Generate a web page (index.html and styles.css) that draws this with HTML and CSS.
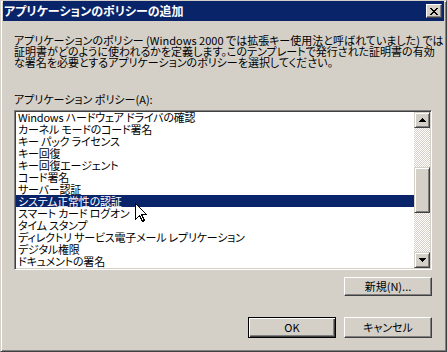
FILE: index.html
```html
<!DOCTYPE html>
<html lang="ja">
<head>
<meta charset="utf-8">
<title>アプリケーションのポリシーの追加</title>
<link rel="stylesheet" href="styles.css">
</head>
<body>
<div class="window">
  <div class="titlebar">
    <span class="title">アプリケーションのポリシーの追加</span>
    <button class="close" aria-label="閉じる">
      <svg width="8" height="7" viewBox="0 0 8 7" shape-rendering="crispEdges">
        <g fill="#000">
          <rect x="0" y="0" width="2" height="1"/><rect x="6" y="0" width="2" height="1"/>
          <rect x="1" y="1" width="2" height="1"/><rect x="5" y="1" width="2" height="1"/>
          <rect x="2" y="2" width="4" height="1"/>
          <rect x="3" y="3" width="2" height="1"/>
          <rect x="2" y="4" width="4" height="1"/>
          <rect x="1" y="5" width="2" height="1"/><rect x="5" y="5" width="2" height="1"/>
          <rect x="0" y="6" width="2" height="1"/><rect x="6" y="6" width="2" height="1"/>
        </g>
      </svg>
    </button>
  </div>
  <div class="content">
    <p class="desc">
      <span class="line">アプリケーションのポリシー (Windows 2000 では拡張キー使用法と呼ばれていました) では</span>
      <span class="line">証明書がどのように使われるかを定義します。このテンプレートで発行された証明書の有効</span>
      <span class="line">な署名を必要とするアプリケーションのポリシーを選択してください。</span>
    </p>
    <div class="label">アプリケーション ポリシー(A):</div>
    <div class="listbox">
      <div class="listview">
        <ul class="items">
          <li>Windows ハードウェア ドライバの確認</li>
          <li>カーネル モードのコード署名</li>
          <li>キー パック ライセンス</li>
          <li>キー回復</li>
          <li>キー回復エージェント</li>
          <li>コード署名</li>
          <li>サーバー認証</li>
          <li class="selected">システム正常性の認証</li>
          <li>スマート カード ログオン</li>
          <li>タイム スタンプ</li>
          <li>ディレクトリ サービス電子メール レプリケーション</li>
          <li>デジタル権限</li>
          <li>ドキュメントの署名</li>
          <li>ファイル回復</li>
        </ul>
      </div>
      <div class="scrollbar">
        <div class="sb-btn">
          <svg width="7" height="4" viewBox="0 0 7 4" shape-rendering="crispEdges"><g fill="#000"><rect x="3" y="0" width="1" height="1"/><rect x="2" y="1" width="3" height="1"/><rect x="1" y="2" width="5" height="1"/><rect x="0" y="3" width="7" height="1"/></g></svg>
        </div>
        <div class="thumb"></div>
        <div class="sb-space"></div>
        <div class="sb-btn">
          <svg width="7" height="4" viewBox="0 0 7 4" shape-rendering="crispEdges"><g fill="#000"><rect x="0" y="0" width="7" height="1"/><rect x="1" y="1" width="5" height="1"/><rect x="2" y="2" width="3" height="1"/><rect x="3" y="3" width="1" height="1"/></g></svg>
        </div>
      </div>
    </div>
    <div class="row-new">
      <button class="btn btn-new">新規(N)...</button>
    </div>
    <div class="row-actions">
      <button class="btn btn-default">OK</button>
      <button class="btn">キャンセル</button>
    </div>
  </div>
</div>
<svg class="cursor" width="12" height="19" viewBox="0 0 12 19" shape-rendering="crispEdges">
  <path d="M0.5 0.5 V16.5 L4.5 12.5 L7.5 18.5 L9.5 17.5 L6.5 11.5 H11.5 Z" fill="#fff" stroke="#000" stroke-width="1"/>
</svg>
</body>
</html>
```
FILE: styles.css
```css
html, body {
  margin: 0;
  padding: 0;
  background: #d4d0c8;
}

body {
  font-family: "Noto Sans CJK JP", sans-serif;
  font-size: 11px;
  font-feature-settings: "palt";
  color: #000;
}

.window {
  width: 447px;
  height: 352px;
  box-sizing: border-box;
  border: 1px solid;
  border-color: #d4d0c8 #404040 #404040 #d4d0c8;
  box-shadow: inset 1px 1px #fff, inset -1px -1px #808080;
  padding: 0 2px 2px 2px;
  background: #d4d0c8;
  display: flex;
  flex-direction: column;
}

.titlebar {
  height: 20px;
  flex: none;
  background: #0a246a;
  display: flex;
  align-items: center;
  justify-content: space-between;
  padding: 0 2px 0 1px;
}

.title {
  color: #fff;
  font-weight: bold;
  font-size: 12px;
  line-height: 20px;
  white-space: nowrap;
}

.close {
  width: 16px;
  height: 14px;
  box-sizing: border-box;
  padding: 0;
  margin: 0;
  border: 1px solid;
  border-color: #fff #404040 #404040 #fff;
  box-shadow: inset -1px -1px #808080;
  background: #d4d0c8;
  display: flex;
  align-items: center;
  justify-content: center;
}

.content {
  flex: 1;
  display: flex;
  flex-direction: column;
  padding: 14px 12px 0 11px;
}

.desc {
  margin: 0;
  line-height: 11px;
}

.line {
  display: block;
  white-space: nowrap;
}

.label {
  margin-top: 26px;
  line-height: 11px;
  white-space: nowrap;
}

.listbox {
  margin-top: 5px;
  height: 160px;
  flex: none;
  box-sizing: border-box;
  border: 1px solid;
  border-color: #808080 #fff #fff #808080;
  box-shadow: inset 1px 1px #404040, inset -1px -1px #d4d0c8;
  padding: 1px;
  background: #fff;
  display: flex;
}

.listview {
  flex: 1;
  overflow: hidden;
}

.items {
  list-style: none;
  margin: -1px 0 0 0;
  padding: 0;
}

.items li {
  height: 12px;
  line-height: 12px;
  padding-left: 2px;
  white-space: nowrap;
  letter-spacing: -0.2px;
}

.items li.selected {
  background: #0a246a;
  color: #fff;
}

.scrollbar {
  width: 16px;
  flex: none;
  display: flex;
  flex-direction: column;
  background-image: conic-gradient(#d4d0c8 25%, #fff 0 50%, #d4d0c8 0 75%, #fff 0);
  background-size: 2px 2px;
}

.sb-btn,
.thumb {
  box-sizing: border-box;
  border: 1px solid;
  border-color: #d4d0c8 #404040 #404040 #d4d0c8;
  box-shadow: inset 1px 1px #fff, inset -1px -1px #808080;
  background: #d4d0c8;
}

.sb-btn {
  height: 16px;
  flex: none;
  display: flex;
  align-items: center;
  justify-content: center;
}

.thumb {
  margin-top: 39px;
  height: 46px;
  flex: none;
}

.sb-space {
  flex: 1;
}

.row-new {
  margin-top: 7px;
  display: flex;
  justify-content: flex-end;
}

.row-actions {
  margin-top: 21px;
  display: flex;
  justify-content: flex-end;
  gap: 8px;
}

.btn {
  width: 88px;
  height: 21px;
  box-sizing: border-box;
  margin: 0;
  padding: 0;
  border: 1px solid;
  border-color: #fff #404040 #404040 #fff;
  box-shadow: inset -1px -1px #808080;
  background: #d4d0c8;
  font: inherit;
  font-size: 11px;
  line-height: 17px;
  color: #000;
}

.btn-new {
  height: 19px;
  line-height: 15px;
}

.btn-default {
  border-color: #000;
  box-shadow: inset 1px 1px #fff, inset -1px -1px #404040, inset -2px -2px #808080;
}

.cursor {
  position: absolute;
  left: 135px;
  top: 203px;
}
```
